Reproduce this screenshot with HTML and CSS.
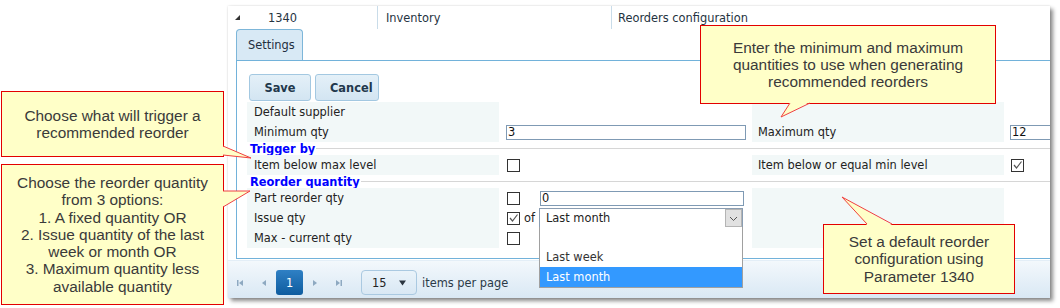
FILE: index.html
```html
<!DOCTYPE html>
<html lang="en">
<head>
    <meta charset="UTF-8">
    <title>Reorders configuration</title>
    <link rel="stylesheet" href="styles.css">
</head>
<body>
    <div class="panel">
        <div class="grid-row">
            <div class="cell cell-expand"><span class="expand"></span></div>
            <div class="cell cell-id">1340</div>
            <div class="cell cell-module">Inventory</div>
            <div class="cell cell-name">Reorders configuration</div>
        </div>

        <div class="detail">
            <div class="tabs"><div class="tab">Settings</div></div>
            <div class="tab-body">
                <div class="actions">
                    <button class="btn">Save</button>
                    <button class="btn">Cancel</button>
                </div>

                <div class="group">
                    <div class="labels">
                        <div class="line">Default supplier</div>
                        <div class="line">Minimum qty</div>
                    </div>
                    <div class="values">
                        <div class="line"></div>
                        <div class="line"><span class="field field-min">3</span></div>
                    </div>
                    <div class="labels labels-right">
                        <div class="line"></div>
                        <div class="line">Maximum qty</div>
                    </div>
                    <div class="values values-right">
                        <div class="line"></div>
                        <div class="line"><span class="field field-max">12</span></div>
                    </div>
                </div>

                <div class="section-head"><span class="section-title">Trigger by</span><span class="section-line"></span></div>

                <div class="group">
                    <div class="labels">
                        <div class="line">Item below max level</div>
                    </div>
                    <div class="values">
                        <div class="line"><span class="check"></span></div>
                    </div>
                    <div class="labels labels-right">
                        <div class="line">Item below or equal min level</div>
                    </div>
                    <div class="values values-right">
                        <div class="line">
                            <span class="check"><svg width="11" height="11" viewBox="0 0 11 11"><polyline points="2,5 4.5,8 9.5,1.5" fill="none" stroke="#555" stroke-width="1.2"/></svg></span>
                        </div>
                    </div>
                </div>

                <div class="section-head"><span class="section-title">Reorder quantity</span><span class="section-line"></span></div>

                <div class="group">
                    <div class="labels">
                        <div class="line">Part reorder qty</div>
                        <div class="line">Issue qty</div>
                        <div class="line">Max - current qty</div>
                    </div>
                    <div class="values">
                        <div class="line">
                            <span class="check"></span><span class="of"></span>
                            <span class="field field-part">0</span>
                        </div>
                        <div class="line">
                            <span class="check"><svg width="11" height="11" viewBox="0 0 11 11"><polyline points="2,5 4.5,8 9.5,1.5" fill="none" stroke="#555" stroke-width="1.2"/></svg></span><span class="of">of</span>
                            <div class="select">
                                <span class="select-text">Last month</span>
                                <span class="select-arrow"><svg width="15" height="16" viewBox="0 0 15 16"><polyline points="4,7 7.5,10.5 11,7" fill="none" stroke="#555" stroke-width="1"/></svg></span>
                                <ul class="select-list">
                                    <li></li>
                                    <li>Last week</li>
                                    <li class="selected">Last month</li>
                                </ul>
                            </div>
                        </div>
                        <div class="line"><span class="check"></span></div>
                    </div>
                    <div class="labels labels-right"></div>
                    <div class="values values-right"></div>
                </div>
            </div>
        </div>

        <div class="pager">
            <span class="pager-nav">
                <svg width="8" height="8" viewBox="0 0 8 8"><rect x="1" y="1" width="1.5" height="6" fill="#8ea9c1"/><polygon points="7,1 3,4 7,7" fill="#8ea9c1"/></svg>
            </span>
            <span class="pager-nav">
                <svg width="8" height="8" viewBox="0 0 8 8"><polygon points="6,1 2,4 6,7" fill="#8ea9c1"/></svg>
            </span>
            <span class="pager-page">1</span>
            <span class="pager-nav">
                <svg width="8" height="8" viewBox="0 0 8 8"><polygon points="2,1 6,4 2,7" fill="#8ea9c1"/></svg>
            </span>
            <span class="pager-nav">
                <svg width="8" height="8" viewBox="0 0 8 8"><polygon points="1,1 5,4 1,7" fill="#8ea9c1"/><rect x="5.5" y="1" width="1.5" height="6" fill="#8ea9c1"/></svg>
            </span>
            <span class="pager-size">15<svg width="7" height="6" viewBox="0 0 7 6"><polygon points="0,0.5 7,0.5 3.5,5.5" fill="#2b3540"/></svg></span>
            <span class="pager-info">items per page</span>
        </div>
    </div>

    <div class="callout callout-trigger">Choose what will trigger a<br>recommended reorder</div>
    <div class="callout callout-quantity">Choose the reorder quantity<br>from 3 options:<br>1. A fixed quantity OR<br>2. Issue quantity of the last<br>week or month OR<br>3. Maximum quantity less<br>available quantity</div>
    <div class="callout callout-minmax">Enter the minimum and maximum<br>quantities to use when generating<br>recommended reorders</div>
    <div class="callout callout-default">Set a default reorder<br>configuration using<br>Parameter 1340</div>

    <svg class="tails" width="1060" height="308" viewBox="0 0 1060 308">
        <polygon points="222,146 251,158 222,155" fill="#ffffc8"/>
        <polyline points="223,146 251,158 223,155" fill="none" stroke="#f04040" stroke-width="1"/>
        <polygon points="222,191 250,191 222,207" fill="#ffffc8"/>
        <polyline points="223,191 250,191 223,207" fill="none" stroke="#f04040" stroke-width="1"/>
        <polygon points="790,102 781,117 810,102" fill="#ffffc8"/>
        <polyline points="790,103 781,117 810,103" fill="none" stroke="#f04040" stroke-width="1"/>
        <polygon points="867,225 842,197 892,225" fill="#ffffc8"/>
        <polyline points="867,224 842,197 892,224" fill="none" stroke="#f04040" stroke-width="1"/>
    </svg>
</body>
</html>
```

FILE: styles.css
```css
body {
    margin: 0;
    width: 1060px;
    height: 308px;
    position: relative;
    overflow: hidden;
    background-color: #fff;
    font-family: 'DejaVu Sans', Verdana, sans-serif;
    font-size: 11.4px;
    color: #222;
}

.panel {
    margin: 6px 0 0 228px;
    width: 822px;
    height: 292px;
    background-color: #fff;
    box-shadow: 3px 3px 4px rgba(0, 0, 0, 0.45), 0 0 2px rgba(0, 0, 0, 0.15);
    overflow: hidden;
}

/* parent grid row */
.grid-row {
    display: flex;
    height: 23px;
}

.cell {
    display: flex;
    align-items: center;
    color: #25333f;
}

.cell-expand {
    width: 30px;
    padding-left: 7px;
    box-sizing: border-box;
}

.expand {
    width: 0;
    height: 0;
    border-style: solid;
    border-width: 0 0 5px 5px;
    border-color: transparent transparent #333 transparent;
}

.cell-id {
    width: 119px;
    padding-left: 10px;
    box-sizing: border-box;
}

.cell-module {
    width: 234px;
    padding-left: 8px;
    box-sizing: border-box;
    border-left: 1px solid #c9dce9;
}

.cell-name {
    flex: 1;
    padding-left: 6px;
    border-left: 1px solid #c9dce9;
}

/* detail: tab strip + body */
.detail {
    margin-left: 8px;
    width: 860px;
}

.tabs {
    display: flex;
    height: 31px;
}

.tab {
    position: relative;
    z-index: 1;
    width: 67px;
    height: 31px;
    margin-bottom: -1px;
    box-sizing: border-box;
    padding: 0 0 0 11px;
    display: flex;
    align-items: center;
    background-color: #d8e9f5;
    border: 1px solid #7db6d9;
    border-bottom: none;
    border-radius: 4px 4px 0 0;
    color: #1f2f3f;
}

.tab-body {
    border: 1px solid #72b2da;
    border-right: none;
    padding: 13px 0 10px 10px;
}

.actions {
    display: flex;
    gap: 4px;
    margin: 0 0 1px 2px;
}

.btn {
    height: 27px;
    padding: 0 14px;
    font-family: 'DejaVu Sans', Verdana, sans-serif;
    font-size: 11.4px;
    font-weight: bold;
    color: #22384c;
    background: linear-gradient(#e4f0f8, #d3e5f2);
    border: 1px solid #a3c8e1;
    border-radius: 3px;
}

.btn:first-child {
    width: 62px;
}

.btn:last-child {
    width: 64px;
}

/* form */
.group {
    display: grid;
    grid-template-columns: 252px 253px 252px 100px;
}

.labels {
    background-color: #f2f8f8;
}

.line {
    height: 20px;
    display: flex;
    align-items: center;
}

.labels .line {
    padding-left: 7px;
}

.labels-right .line {
    padding-left: 6px;
}

.values .line {
    padding-left: 8px;
}

.values-right .line {
    padding-left: 7px;
}

.section-head {
    display: flex;
    align-items: center;
    height: 13px;
}

.section-title {
    padding-left: 3px;
    font-weight: bold;
    color: #0000ff;
}

.section-line {
    flex: 1;
    margin-left: 1px;
    border-top: 1px solid #d6d6d6;
}

.field {
    box-sizing: border-box;
    height: 15px;
    line-height: 13px;
    padding-left: 1px;
    border: 1px solid #7f9ab4;
    color: #111;
}

.field-min {
    width: 240px;
    margin-left: -1px;
}

.field-max {
    width: 120px;
    margin-left: -1px;
}

.field-part {
    width: 204px;
    margin-left: 1px;
}

.check {
    box-sizing: border-box;
    width: 13px;
    height: 13px;
    border: 1px solid #333;
    background-color: #fff;
    display: flex;
}

.of {
    width: 19px;
    padding-left: 4px;
    box-sizing: border-box;
}

.select {
    position: relative;
    box-sizing: border-box;
    width: 204px;
    height: 20px;
    display: flex;
    align-items: center;
    justify-content: space-between;
    border: 1px solid #8a9db2;
    background-color: #fff;
}

.select-text {
    padding-left: 6px;
}

.select-arrow {
    box-sizing: border-box;
    width: 17px;
    height: 18px;
    display: flex;
    align-items: center;
    justify-content: center;
    background-color: #e1e1e1;
    border: 1px solid #b4b4b4;
}

.select-list {
    position: absolute;
    z-index: 5;
    top: 18px;
    left: -1px;
    width: 204px;
    box-sizing: border-box;
    margin: 0;
    padding: 0;
    list-style: none;
    background-color: #fff;
    border: 1px solid #a0a0a0;
    border-top: none;
}

.select-list li {
    height: 20px;
    line-height: 20px;
    padding-left: 6px;
    color: #333;
}

.select-list li.selected {
    background-color: #3399ff;
    color: #fff;
}

/* pager */
.pager {
    height: 38px;
    margin-top: 1px;
    box-sizing: border-box;
    padding-top: 9px;
    display: flex;
    align-items: flex-start;
    background: linear-gradient(#f3f8fc, #d9e8f4);
    border-top: 1px solid #e3eef7;
}

.pager-nav {
    width: 24px;
    height: 25px;
    display: flex;
    align-items: center;
    justify-content: center;
}

.pager-page {
    width: 27px;
    height: 25px;
    display: flex;
    align-items: center;
    justify-content: center;
    color: #fff;
    background: linear-gradient(#2f80c4, #0e5c9f);
    border-radius: 3px;
}

.pager-size {
    box-sizing: border-box;
    width: 56px;
    height: 25px;
    margin-left: 10px;
    padding: 0 10px 0 10px;
    display: flex;
    align-items: center;
    justify-content: space-between;
    border: 1px solid #aac9e1;
    border-radius: 4px;
    background: linear-gradient(#eaf3fa, #d9e8f4);
    color: #222;
}

.pager-info {
    height: 25px;
    display: flex;
    align-items: center;
    margin-left: 5px;
    color: #2b3a48;
}

/* annotation callouts */
.callout {
    position: absolute;
    z-index: 3;
    box-sizing: border-box;
    display: flex;
    align-items: center;
    justify-content: center;
    text-align: center;
    background-color: #ffffc8;
    border: 1px solid #e30000;
    font-family: 'Liberation Sans', Arial, sans-serif;
    font-size: 15.4px;
    line-height: 17.2px;
    color: #3a3a3a;
}

.callout-trigger {
    left: 1px;
    top: 91px;
    width: 223px;
    height: 66px;
}

.callout-quantity {
    left: 1px;
    top: 164px;
    width: 223px;
    height: 141px;
}

.callout-minmax {
    left: 700px;
    top: 25px;
    width: 296px;
    height: 79px;
}

.callout-default {
    left: 823px;
    top: 224px;
    width: 192px;
    height: 70px;
}

.tails {
    position: absolute;
    z-index: 4;
    left: 0;
    top: 0;
    pointer-events: none;
}
```
